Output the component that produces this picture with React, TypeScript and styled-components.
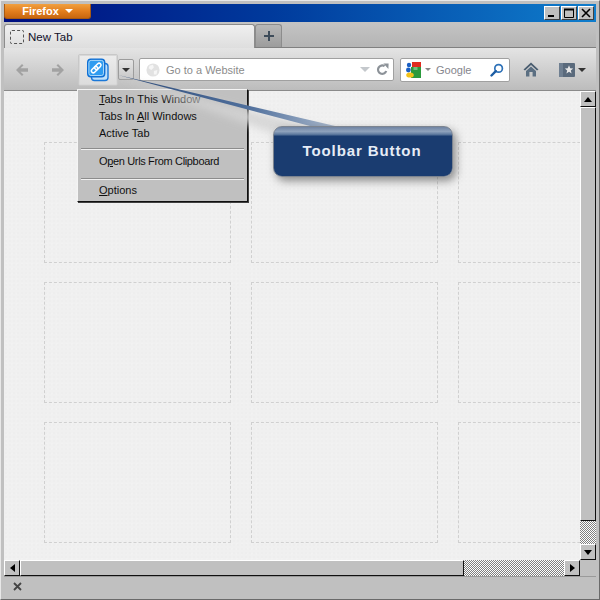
import React from 'react'
import styled, { createGlobalStyle } from 'styled-components'

const GlobalStyle = createGlobalStyle`
  html, body {
    margin: 0;
    padding: 0;
    width: 600px;
    height: 600px;
    overflow: hidden;
    background: #c0c0c0;
  }
`

const Frame = styled.div`
  position: relative;
  box-sizing: border-box;
  width: 600px;
  height: 600px;
  padding: 3px;
  display: flex;
  flex-direction: column;
  background: #c0c0c0;
  border-top: 1px solid #e8e8e8;
  border-left: 1px solid #e8e8e8;
  border-right: 1px solid #6a6a6a;
  border-bottom: 1px solid #6a6a6a;
  font-family: 'Liberation Sans', Arial, sans-serif;
`

const TitleBar = styled.div`
  height: 18px;
  flex: none;
  display: flex;
  justify-content: space-between;
  background: linear-gradient(90deg, #000f80 0%, #003a9c 45%, #0f7dcc 100%);
`

const AppButton = styled.div`
  box-sizing: border-box;
  width: 87px;
  height: 15px;
  display: flex;
  align-items: center;
  justify-content: center;
  gap: 6px;
  border-radius: 0 0 3px 3px;
  border: 1px solid #a85a12;
  border-top: none;
  background: linear-gradient(180deg, #f0a040 0%, #e37f1e 50%, #c8660f 100%);
  color: #fff;
  font-size: 11px;
  font-weight: 700;
`

const WindowButtons = styled.div`
  display: flex;
  gap: 1px;
  padding: 2px 2px 0 0;
`

const WindowButton = styled.div`
  box-sizing: border-box;
  width: 16px;
  height: 14px;
  display: flex;
  align-items: center;
  justify-content: center;
  background: #c0c0c0;
  border-style: solid;
  border-width: 1px;
  border-color: #fff #404040 #404040 #fff;
`

const TabStrip = styled.div`
  height: 26px;
  flex: none;
  display: flex;
  align-items: flex-end;
  background: linear-gradient(180deg, #c4c4c4, #b4b4b4);
  border-bottom: 1px solid #808080;
  box-sizing: border-box;
`

const ActiveTab = styled.div`
  box-sizing: border-box;
  width: 251px;
  height: 24px;
  margin-bottom: -1px;
  display: flex;
  align-items: center;
  gap: 4px;
  padding-left: 5px;
  border: 1px solid #8c8c8c;
  border-bottom: none;
  border-radius: 3px 3px 0 0;
  background: linear-gradient(180deg, #f0f0f0, #dedede);
  font-size: 11.5px;
  color: #10102a;
`

const TabFavicon = styled.div`
  box-sizing: border-box;
  width: 14px;
  height: 14px;
  border: 1px dashed #555;
  border-radius: 2px;
`

const NewTabButton = styled.div`
  box-sizing: border-box;
  width: 27px;
  height: 23px;
  display: flex;
  align-items: center;
  justify-content: center;
  border: 1px solid #8c8c8c;
  border-bottom: none;
  border-radius: 3px 3px 0 0;
  background: linear-gradient(180deg, #b8b8b8, #9c9c9c);
`

const Toolbar = styled.div`
  box-sizing: border-box;
  height: 43px;
  flex: none;
  display: flex;
  align-items: center;
  padding-top: 1px;
  background: linear-gradient(180deg, #e4e4e4, #bcbcbc);
  border-bottom: 1px solid #8a8a8a;
`

const NavButton = styled.div`
  width: 36px;
  display: flex;
  justify-content: center;
`

const ToolbarCluster = styled.div`
  display: flex;
  align-items: center;
  margin: 0 5px 0 2px;
`

const HighlightButton = styled.div`
  box-sizing: border-box;
  width: 40px;
  height: 32px;
  display: flex;
  align-items: center;
  justify-content: center;
  border: 1px solid #c8c8c8;
  border-radius: 2px;
  background: linear-gradient(180deg, #ececec, #dcdcdc);
  box-shadow: 0 0 0 1px #d8d8d8 inset;
`

const DropButton = styled.div`
  box-sizing: border-box;
  width: 16px;
  height: 21px;
  display: flex;
  align-items: center;
  justify-content: center;
  border: 1px solid #9c9c9c;
  border-radius: 2px;
  background: linear-gradient(180deg, #e4e4e4, #c8c8c8);
`

const Caret = styled.div<{ $color?: string; $size?: number }>`
  width: 0;
  height: 0;
  border-left: ${(p) => p.$size ?? 4}px solid transparent;
  border-right: ${(p) => p.$size ?? 4}px solid transparent;
  border-top: ${(p) => p.$size ?? 4}px solid ${(p) => p.$color ?? '#333'};
`

const UrlBox = styled.div`
  box-sizing: border-box;
  width: 255px;
  height: 23px;
  flex: none;
  display: flex;
  align-items: center;
  background: #fff;
  border: 1px solid #a0a0a0;
  border-radius: 2px;
  font-size: 11px;
  color: #8c8c8c;
`

const SearchBox = styled(UrlBox)`
  width: 110px;
  height: 24px;
  margin-left: 6px;
`

const UrlText = styled.span`
  flex: 1;
  margin-left: 6px;
`

const GoogleText = styled.span`
  flex: 1;
  margin-left: 2px;
  color: #85858c;
`

const RightIcon = styled.div<{ $width: number }>`
  width: ${(p) => p.$width}px;
  flex: none;
  display: flex;
  justify-content: center;
  align-items: center;
  gap: 3px;
`

const Body = styled.div`
  flex: none;
  display: grid;
  grid-template-columns: 576px 16px;
  grid-template-rows: 469px 16px;
`

const Content = styled.div`
  overflow: hidden;
  box-sizing: border-box;
  padding: 51px 0 0 40px;
  background-color: #f0f0f0;
  background-image: radial-gradient(#eeeeee 1px, transparent 1px), radial-gradient(#f2f2f2 1px, transparent 1px);
  background-size: 4px 4px, 5px 5px;
`

const TileGrid = styled.div`
  display: grid;
  grid-template-columns: repeat(3, 187px);
  grid-auto-rows: 121px;
  column-gap: 20px;
  row-gap: 19px;
  width: 640px;
`

const Tile = styled.div`
  border: 1px dashed #d0d0d0;
  box-sizing: border-box;
`

const checker = `
  background-color: #fff;
  background-image: conic-gradient(#808080 25%, #fff 0 50%, #808080 0 75%, #fff 0);
  background-size: 2px 2px;
`

const VScroll = styled.div`
  display: flex;
  flex-direction: column;
  ${checker}
`

const HScroll = styled.div`
  display: flex;
  ${checker}
`

const ScrollButton = styled.div`
  box-sizing: border-box;
  width: 16px;
  height: 16px;
  flex: none;
  display: flex;
  align-items: center;
  justify-content: center;
  background: #c0c0c0;
  border-style: solid;
  border-width: 1px;
  border-color: #fff #101010 #101010 #fff;
`

const Thumb = styled.div<{ $length: number; $vertical?: boolean }>`
  box-sizing: border-box;
  flex: none;
  ${(p) => (p.$vertical ? `height: ${p.$length}px;` : `width: ${p.$length}px;`)}
  background: #c0c0c0;
  border-style: solid;
  border-width: 1px;
  border-color: #fff #101010 #101010 #fff;
`

const Spacer = styled.div`
  flex: 1;
`

const Corner = styled.div`
  background: #c0c0c0;
`

const Triangle = styled.div<{ $dir: 'up' | 'down' | 'left' | 'right' }>`
  width: 0;
  height: 0;
  border: 4px solid transparent;
  ${(p) => {
    if (p.$dir === 'up') return 'border-top: none; border-bottom: 5px solid #000;'
    if (p.$dir === 'down') return 'border-bottom: none; border-top: 5px solid #000;'
    if (p.$dir === 'left') return 'border-left: none; border-right: 5px solid #000;'
    return 'border-right: none; border-left: 5px solid #000;'
  }}
`

const StatusBar = styled.div`
  flex: 1;
  display: flex;
  align-items: center;
  padding-left: 9px;
  background: #c0c0c0;
  border-top: 1px solid #9a9a9a;
`

const Leader = styled.svg`
  position: absolute;
  left: -1px;
  top: -1px;
  width: 600px;
  height: 600px;
  pointer-events: none;
`

const Menu = styled.div`
  position: absolute;
  left: 76px;
  top: 88px;
  box-sizing: border-box;
  width: 171px;
  height: 113px;
  padding: 2px 3px 0 3px;
  background: #c0c0c0;
  border-style: solid;
  border-width: 1px;
  border-color: #f4f4f4 #101010 #101010 #f4f4f4;
  box-shadow: 1px 1px 0 #404040;
  font-size: 11px;
  color: #101010;
`

const MenuItem = styled.div<{ $tight?: boolean }>`
  height: 17px;
  line-height: 15px;
  padding-left: 18px;
  white-space: nowrap;
  letter-spacing: ${(p) => (p.$tight ? '-0.35px' : 'normal')};

  u {
    text-underline-offset: 1px;
  }
`

const MenuRule = styled.div<{ $top: number; $bottom: number }>`
  height: 1px;
  margin: ${(p) => p.$top}px 0 ${(p) => p.$bottom}px;
  background: #f0f0f0;
  border-top: 1px solid #8c8c8c;
`

const Callout = styled.div`
  position: absolute;
  left: 272px;
  top: 125px;
  box-sizing: border-box;
  width: 180px;
  height: 51px;
  display: flex;
  align-items: center;
  justify-content: center;
  padding: 0 2px 3px 0;
  border: 1px solid #7c8490;
  border-radius: 9px;
  background: linear-gradient(180deg, #6f83a2 0%, #8fa2bc 9%, #5f7a9f 15%, #1a3c70 19%, #1a3c70 100%);
  box-shadow: 3px 4px 8px rgba(60, 60, 60, 0.55);
  color: #e6ecf6;
  font-size: 15px;
  font-weight: 700;
  letter-spacing: 0.9px;
`

const GlobeSvg = styled.svg`
  margin-left: 6px;
  flex: none;
`

const GoogleSvg = styled.svg`
  margin-left: 4px;
  flex: none;
`

const ArrowSvg = styled.svg<{ $flip?: boolean }>`
  transform: ${(p) => (p.$flip ? 'scaleX(-1)' : 'none')};
`

const ToolbarLinkIcon = () => (
  <svg width="26" height="26" viewBox="0 0 26 26">
    <rect x="6.5" y="6.5" width="16.5" height="17" rx="3" fill="#bfe0fa" stroke="#1b78d8" strokeWidth="1.4" />
    <rect x="2.7" y="2.2" width="17" height="17.5" rx="3.2" fill="#2f9cf0" stroke="#0f6fd4" strokeWidth="1.4" />
    <rect x="3.9" y="3.4" width="14.6" height="15.1" rx="2.2" fill="none" stroke="#a8d6f8" strokeWidth="1" />
    <g transform="rotate(-45 11.2 11)" fill="none" stroke="#fff" strokeWidth="1.5">
      <rect x="5.2" y="9.1" width="7.4" height="3.8" rx="1.9" />
      <rect x="9.8" y="9.1" width="7.4" height="3.8" rx="1.9" />
    </g>
  </svg>
)

const BackIcon = ({ flip }: { flip?: boolean }) => (
  <ArrowSvg $flip={flip} width="14" height="14" viewBox="0 0 14 14">
    <path d="M7 1 L1 7 L7 13 L8.5 11.5 L5.5 8.8 H13 V5.2 H5.5 L8.5 2.5 Z" fill="#a2a2a2" />
  </ArrowSvg>
)

const GlobeIcon = () => (
  <GlobeSvg width="14" height="14" viewBox="0 0 16 16">
    <circle cx="8" cy="8" r="7.5" fill="#e2e2e2" />
    <path d="M4 3 L8 2 L9 5 L6 8 L3 6 Z M9 9 L13 8 L12 13 L9 13 Z" fill="#f6f6f6" />
  </GlobeSvg>
)

const ReloadIcon = () => (
  <svg width="13" height="13" viewBox="0 0 13 13">
    <path d="M10.2 8 A4.2 4.2 0 1 1 8.6 3.2" fill="none" stroke="#8c9298" strokeWidth="2.2" />
    <path d="M7.4 0.4 L12.6 0.6 L12.4 6 Z" fill="#8c9298" />
  </svg>
)

const GoogleIcon = () => (
  <GoogleSvg width="17" height="17" viewBox="0 0 17 17">
    <rect x="7" y="1" width="9" height="7" fill="#e02b20" />
    <rect x="6" y="6" width="10" height="11" fill="#2b9a3c" />
    <path d="M8.5 6 h4 v3 h-4 z" fill="#fff" opacity="0.35" />
    <circle cx="4" cy="4" r="2.2" fill="#1a5fc4" />
    <circle cx="3.4" cy="9" r="2.4" fill="#1a5fc4" />
    <ellipse cx="5" cy="14" rx="3.8" ry="2.6" fill="#f2c21a" />
  </GoogleSvg>
)

const SearchIcon = () => (
  <svg width="14" height="14" viewBox="0 0 14 14">
    <circle cx="8.6" cy="5.4" r="3.8" fill="none" stroke="#2f72b8" strokeWidth="1.7" />
    <path d="M5.8 8.2 L1.5 12.5" stroke="#1c5da4" strokeWidth="2.4" strokeLinecap="round" />
  </svg>
)

const HomeIcon = () => (
  <svg width="16" height="15" viewBox="0 0 16 15">
    <path d="M8 0.5 L0.5 7.5 L2 8.5 L8 3 L14 8.5 L15.5 7.5 Z" fill="#4a5d70" />
    <path d="M3 9 L8 4.5 L13 9 V14.5 H9.6 V10 H6.4 V14.5 H3 Z" fill="#5b6f82" />
  </svg>
)

const BookmarkIcon = () => (
  <svg width="16" height="14" viewBox="0 0 16 14">
    <rect x="0" y="0" width="16" height="14" rx="1" fill="#5a6a7c" />
    <rect x="0" y="0" width="4" height="14" fill="#6f7f91" />
    <path d="M10 2.2 L11.2 5.2 L14.2 5.4 L11.8 7.4 L12.6 10.6 L10 8.8 L7.4 10.6 L8.2 7.4 L5.8 5.4 L8.8 5.2 Z" fill="#e8e8e8" />
  </svg>
)

const tiles = Array.from({ length: 9 }, (_, i) => i)

export default function App() {
  return (
    <>
      <GlobalStyle />
      <Frame>
        <TitleBar>
          <AppButton>
            Firefox
            <Caret $color="#fff" $size={4} />
          </AppButton>
          <WindowButtons>
            <WindowButton>
              <svg width="10" height="10" viewBox="0 0 10 10">
                <rect x="1" y="7" width="6" height="2" fill="#000" />
              </svg>
            </WindowButton>
            <WindowButton>
              <svg width="10" height="10" viewBox="0 0 10 10">
                <path d="M0.5 1.5 H9.5 V9.5 H0.5 Z" fill="none" stroke="#000" />
                <rect x="0" y="0.5" width="10" height="2" fill="#000" />
              </svg>
            </WindowButton>
            <WindowButton>
              <svg width="10" height="10" viewBox="0 0 10 10">
                <path d="M1 1 L9 9 M9 1 L1 9" stroke="#000" strokeWidth="1.6" />
              </svg>
            </WindowButton>
          </WindowButtons>
        </TitleBar>

        <TabStrip>
          <ActiveTab>
            <TabFavicon />
            New Tab
          </ActiveTab>
          <NewTabButton>
            <svg width="12" height="12" viewBox="0 0 12 12">
              <path d="M6 1 V11 M1 6 H11" stroke="#3e4c5a" strokeWidth="2" />
            </svg>
          </NewTabButton>
        </TabStrip>

        <Toolbar>
          <NavButton>
            <BackIcon />
          </NavButton>
          <NavButton>
            <BackIcon flip />
          </NavButton>
          <ToolbarCluster>
            <HighlightButton>
              <ToolbarLinkIcon />
            </HighlightButton>
            <DropButton>
              <Caret $size={4} />
            </DropButton>
          </ToolbarCluster>
          <UrlBox>
            <GlobeIcon />
            <UrlText>Go to a Website</UrlText>
            <RightIcon $width={12}>
              <Caret $color="#c4c8cc" $size={5} />
            </RightIcon>
            <RightIcon $width={22}>
              <ReloadIcon />
            </RightIcon>
          </UrlBox>
          <SearchBox>
            <GoogleIcon />
            <RightIcon $width={12}>
              <Caret $color="#888" $size={3} />
            </RightIcon>
            <GoogleText>Google</GoogleText>
            <RightIcon $width={24}>
              <SearchIcon />
            </RightIcon>
          </SearchBox>
          <RightIcon $width={42}>
            <HomeIcon />
          </RightIcon>
          <RightIcon $width={40}>
            <BookmarkIcon />
            <Caret $size={4} />
          </RightIcon>
        </Toolbar>

        <Body>
          <Content>
            <TileGrid>
              {tiles.map((t) => (
                <Tile key={t} />
              ))}
            </TileGrid>
          </Content>
          <VScroll>
            <ScrollButton>
              <Triangle $dir="up" />
            </ScrollButton>
            <Thumb $vertical $length={414} />
            <Spacer />
            <ScrollButton>
              <Triangle $dir="down" />
            </ScrollButton>
          </VScroll>
          <HScroll>
            <ScrollButton>
              <Triangle $dir="left" />
            </ScrollButton>
            <Thumb $length={444} />
            <Spacer />
            <ScrollButton>
              <Triangle $dir="right" />
            </ScrollButton>
          </HScroll>
          <Corner />
        </Body>

        <StatusBar>
          <svg width="9" height="9" viewBox="0 0 9 9">
            <path d="M1 1 L8 8 M8 1 L1 8" stroke="#444" strokeWidth="1.8" />
          </svg>
        </StatusBar>

        <Menu>
          <MenuItem>
            <u>T</u>abs In This Window
          </MenuItem>
          <MenuItem>
            Tabs In <u>A</u>ll Windows
          </MenuItem>
          <MenuItem>Active Tab</MenuItem>
          <MenuRule $top={5} $bottom={4} />
          <MenuItem $tight>
            O<u>p</u>en Urls From Clipboard
          </MenuItem>
          <MenuRule $top={7} $bottom={3} />
          <MenuItem>
            <u>O</u>ptions
          </MenuItem>
        </Menu>

        <Leader viewBox="0 0 600 600">
          <defs>
            <linearGradient id="leaderFill" gradientUnits="userSpaceOnUse" x1="118" y1="75" x2="335" y2="126">
              <stop offset="0" stopColor="#2d4a78" />
              <stop offset="0.6" stopColor="#4f6f9c" />
              <stop offset="1" stopColor="#a9b8cc" />
            </linearGradient>
            <filter id="leaderHaze" x="-20%" y="-60%" width="140%" height="220%">
              <feGaussianBlur stdDeviation="4" />
            </filter>
          </defs>
          <path d="M118 78 L336 132 L270 132 Z" fill="#d4d4d4" opacity="0.9" filter="url(#leaderHaze)" />
          <path d="M118 75 L335 126 L310 126 Z" fill="url(#leaderFill)" />
        </Leader>

        <Callout>Toolbar Button</Callout>
      </Frame>
    </>
  )
}
